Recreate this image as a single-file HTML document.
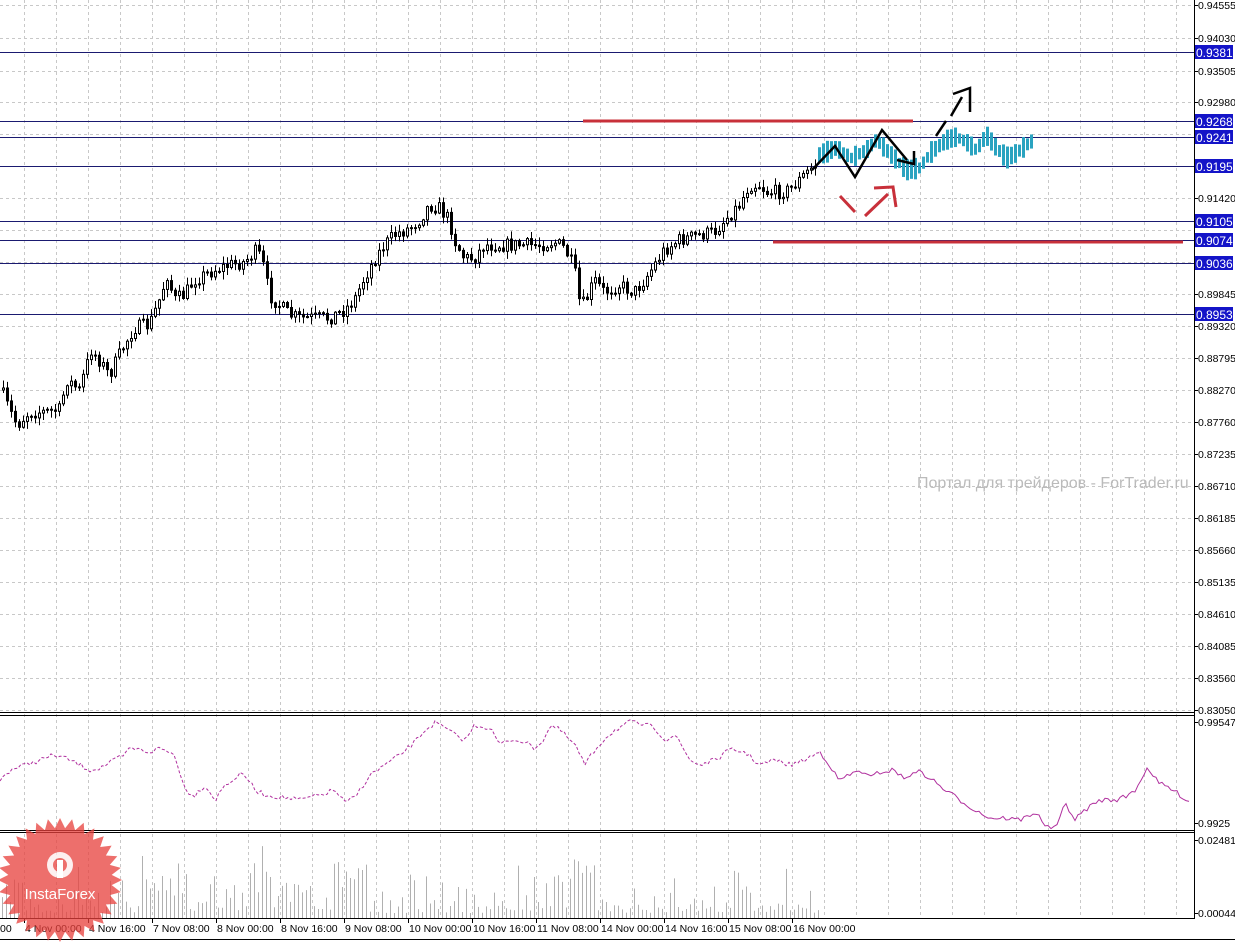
<!DOCTYPE html>
<html><head><meta charset="utf-8"><style>
html,body{margin:0;padding:0;background:#fff;width:1235px;height:942px;overflow:hidden}
svg{display:block}
text{font-family:"Liberation Sans",sans-serif;font-size:10.5px}
</style></head><body>
<svg id="s" width="1235" height="942" xmlns="http://www.w3.org/2000/svg">
<rect width="1235" height="942" fill="#fff"/>
<g id="grid"></g>
<g id="vol"></g>
<g id="hl"></g>
<g id="cd"></g>
<g id="ind"></g>
<line x1="583" y1="121" x2="913" y2="121" stroke="#c8303a" stroke-width="3"/>
<line x1="773" y1="242" x2="1183" y2="242" stroke="#c8303a" stroke-width="3"/>
<polyline points="812,170 835,146 855,177 882,130 907,160" fill="none" stroke="#000" stroke-width="2.5"/>
<polyline points="897,160 914,164 914,151" fill="none" stroke="#000" stroke-width="2.5"/>
<line x1="936" y1="136" x2="946" y2="121" stroke="#000" stroke-width="2.5"/>
<line x1="951" y1="116" x2="962" y2="97" stroke="#000" stroke-width="2.5"/>
<polyline points="953,94 970,88 970,112" fill="none" stroke="#000" stroke-width="2.5"/>
<line x1="840" y1="196" x2="855" y2="212" stroke="#c8303a" stroke-width="3"/>
<line x1="865" y1="216" x2="888" y2="194" stroke="#c8303a" stroke-width="3"/>
<polyline points="874,188 893,187 896,207" fill="none" stroke="#c8303a" stroke-width="3"/>
<line x1="0" y1="712.5" x2="1194" y2="712.5" stroke="#000"/>
<line x1="0" y1="715.5" x2="1194" y2="715.5" stroke="#000"/>
<line x1="0" y1="830.5" x2="1194" y2="830.5" stroke="#000"/>
<line x1="0" y1="832.5" x2="1194" y2="832.5" stroke="#000"/>
<line x1="0" y1="918.5" x2="1194" y2="918.5" stroke="#000"/>
<line x1="1194.5" y1="0" x2="1194.5" y2="919" stroke="#000"/>
<line x1="0" y1="939.5" x2="1235" y2="939.5" stroke="#000"/>
<g id="axis"></g>
<text x="917" y="488" fill="#bbbbbb" style="font-size:16px">Портал для трейдеров - ForTrader.ru</text>
<g opacity="0.75">
<polygon id="star" fill="#e8403c"/>
<circle cx="60" cy="865" r="13" fill="#fff" opacity="0.9"/>
<circle cx="60" cy="865" r="7" fill="#e8403c"/>
<rect x="57" y="860" width="6" height="18" fill="#fff"/>
<text x="60" y="899" fill="#fff" text-anchor="middle" style="font-size:15px">InstaForex</text>
</g>
</svg>
<script>
var NS="http://www.w3.org/2000/svg";
function el(p,t,a,txt){var e=document.createElementNS(NS,t);for(var k in a)e.setAttribute(k,a[k]);if(txt!=null)e.textContent=txt;document.getElementById(p).appendChild(e);return e;}
var hy=[5,38,71,102,134,166,198,230,262,294,326,358,390,422,454,486,518,550,582,614,646,678,710];
hy.forEach(function(y){el('grid','line',{x1:0,x2:1194,y1:y+.5,y2:y+.5,stroke:'#c8c8c8','stroke-dasharray':'3,3'});});
for(var x=24;x<1194;x+=32){el('grid','line',{x1:x+.5,x2:x+.5,y1:0,y2:918,stroke:'#c8c8c8','stroke-dasharray':'3,3'});}
var lv=[[52,'0.9381'],[121,'0.9268'],[137,'0.9241'],[166,'0.9195'],[221,'0.9105'],[240,'0.9074'],[263,'0.9036'],[314,'0.8953']];
var al=[[5,'0.94555'],[38,'0.94030'],[71,'0.93505'],[102,'0.92980'],[198,'0.91420'],[294,'0.89845'],[326,'0.89320'],[358,'0.88795'],[390,'0.88270'],[422,'0.87760'],[454,'0.87235'],[486,'0.86710'],[518,'0.86185'],[550,'0.85660'],[582,'0.85135'],[614,'0.84610'],[646,'0.84085'],[678,'0.83560'],[710,'0.83050'],[722,'0.99547'],[823,'0.9925'],[840,'0.02481'],[913,'0.00044']];
al.forEach(function(a){el('axis','line',{x1:1194,x2:1198,y1:a[0]+.5,y2:a[0]+.5,stroke:'#000'});el('axis','text',{x:1198,y:a[0]+4,fill:'#000'},a[1]);});
lv.forEach(function(a){el('hl','line',{x1:0,x2:1194,y1:a[0]+.5,y2:a[0]+.5,stroke:'#1a1a70'});el('axis','rect',{x:1195,y:a[0]-7,width:38,height:14,fill:'#1414c8'});el('axis','text',{x:1196,y:a[0]+5,fill:'#fff',style:'font-size:12px'},a[1]);});
var tl=['4 Nov 00:00','4 Nov 16:00','7 Nov 08:00','8 Nov 00:00','8 Nov 16:00','9 Nov 08:00','10 Nov 00:00','10 Nov 16:00','11 Nov 08:00','14 Nov 00:00','14 Nov 16:00','15 Nov 08:00','16 Nov 00:00'];
el('axis','text',{x:0,y:932,fill:'#000'},'00');
tl.forEach(function(t,i){var x=24+64*i;el('axis','line',{x1:x+.5,x2:x+.5,y1:919,y2:923,stroke:'#000'});el('axis','text',{x:x+1,y:932,fill:'#000'},t);});
var sd=7;function R(){sd=(sd*16807)%2147483647;return sd/2147483647;}
function interp(pts,x){for(var i=1;i<pts.length;i++){if(x<=pts[i][0]){var a=pts[i-1],b=pts[i];return a[1]+(b[1]-a[1])*(x-a[0])/(b[0]-a[0]);}}return pts[pts.length-1][1];}
var P=[[0,385],[10,410],[18,425],[30,412],[45,412],[60,410],[68,380],[80,390],[92,350],[100,360],[110,375],[125,345],[135,328],[150,325],[160,300],[168,275],[175,300],[185,295],[195,280],[205,275],[215,270],[230,265],[245,262],[258,250],[265,268],[270,295],[280,305],[290,315],[300,318],[315,318],[330,318],[345,310],[355,300],[365,278],[375,260],[385,245],[395,235],[410,228],[420,220],[430,205],[440,208],[450,220],[455,240],[465,258],[475,258],[485,245],[500,245],[520,245],[540,245],[555,242],[565,248],[575,268],[580,300],[585,305],[595,280],[605,292],[620,285],[635,292],[645,280],[655,265],[665,250],[680,240],[700,235],[715,232],[730,215],[740,205],[750,185],[760,185],[768,192],[780,192],[790,190],[800,180],[815,165]];
var prev=interp(P,2);
for(var x=2;x<=815;x+=4){var c=interp(P,x+2)+(R()-.5)*14;var o=prev;var hi=Math.min(o,c)-R()*7-1,lo=Math.max(o,c)+R()*7+1;
el('cd','line',{x1:x+1.5,x2:x+1.5,y1:hi,y2:lo,stroke:'#000'});
var t=Math.min(o,c),h=Math.max(Math.abs(o-c),1);
el('cd','rect',{x:x+.5,y:t,width:2,height:h,fill:c<o?'#fff':'#000',stroke:'#000','stroke-width':1});prev=c;}
var F=[[818,155],[835,148],[850,158],[865,150],[875,140],[885,150],[895,160],[905,170],[918,168],[930,152],[945,140],[955,137],[965,142],[975,150],[985,135],[995,148],[1005,158],[1015,153],[1025,145],[1035,138]];
for(var x=818;x<=1032;x+=4){var y=interp(F,x);var h=10+R()*12;el('cd','rect',{x:x,y:y-h/2,width:3,height:h,fill:'#2aa3c0'});}
var I=[[0,780],[10,770],[25,765],[40,760],[55,755],[70,760],[90,770],[100,768],[115,760],[125,755],[130,748],[150,752],[160,748],[175,755],[185,790],[195,795],[205,785],[215,800],[225,785],[240,775],[245,775],[255,790],[265,795],[280,797],[300,800],[320,795],[335,790],[345,803],[355,797],[370,775],[385,765],[400,755],[415,742],[425,730],[435,723],[445,728],[455,735],[465,740],[475,725],[490,728],[500,745],[510,740],[520,740],[535,748],[545,738],[550,725],[560,730],[575,745],[585,765],[595,750],[605,738],[615,730],[630,722],[645,725],[655,728],[665,740],[675,735],[690,760],[700,765],[715,760],[730,750],[745,752],[760,765],[775,760],[790,765],[800,762],[810,757],[820,752]];
var I2=[[820,752],[830,765],[838,780],[850,775],[860,770],[870,778],[880,772],[895,770],[905,780],[915,770],[930,778],[945,790],[960,800],[975,810],[990,818],[1005,818],[1020,820],[1035,812],[1048,828],[1058,826],[1065,802],[1075,820],[1085,810],[1100,800],[1115,800],[1125,797],[1135,790],[1148,767],[1158,783],[1168,787],[1180,795],[1190,802]];
function pts(A){var s='';for(var x=A[0][0];x<=A[A.length-1][0];x+=3){s+=x+','+(interp(A,x)+(R()-.5)*5).toFixed(1)+' ';}return s;}
el('ind','polyline',{points:pts(I),fill:'none',stroke:'#b0309e','stroke-dasharray':'3,2'});
el('ind','polyline',{points:pts(I2),fill:'none',stroke:'#b0309e'});
for(var x=2;x<=818;x+=4){var base=5+R()*R()*50;if((x>140&&x<190)||(x>250&&x<300)||(x>560&&x<600)||(x>330&&x<370))base+=R()*40;el('vol','line',{x1:x+.5,x2:x+.5,y1:918,y2:918-base,stroke:'#b0b0b0'});}
var s='';for(var i=0;i<64;i++){var r=i%2?52:62;var a=i*Math.PI/32;s+=(60+r*Math.cos(a)).toFixed(1)+','+(880+r*Math.sin(a)).toFixed(1)+' ';}
document.getElementById('star').setAttribute('points',s);
</script>
</body></html>
